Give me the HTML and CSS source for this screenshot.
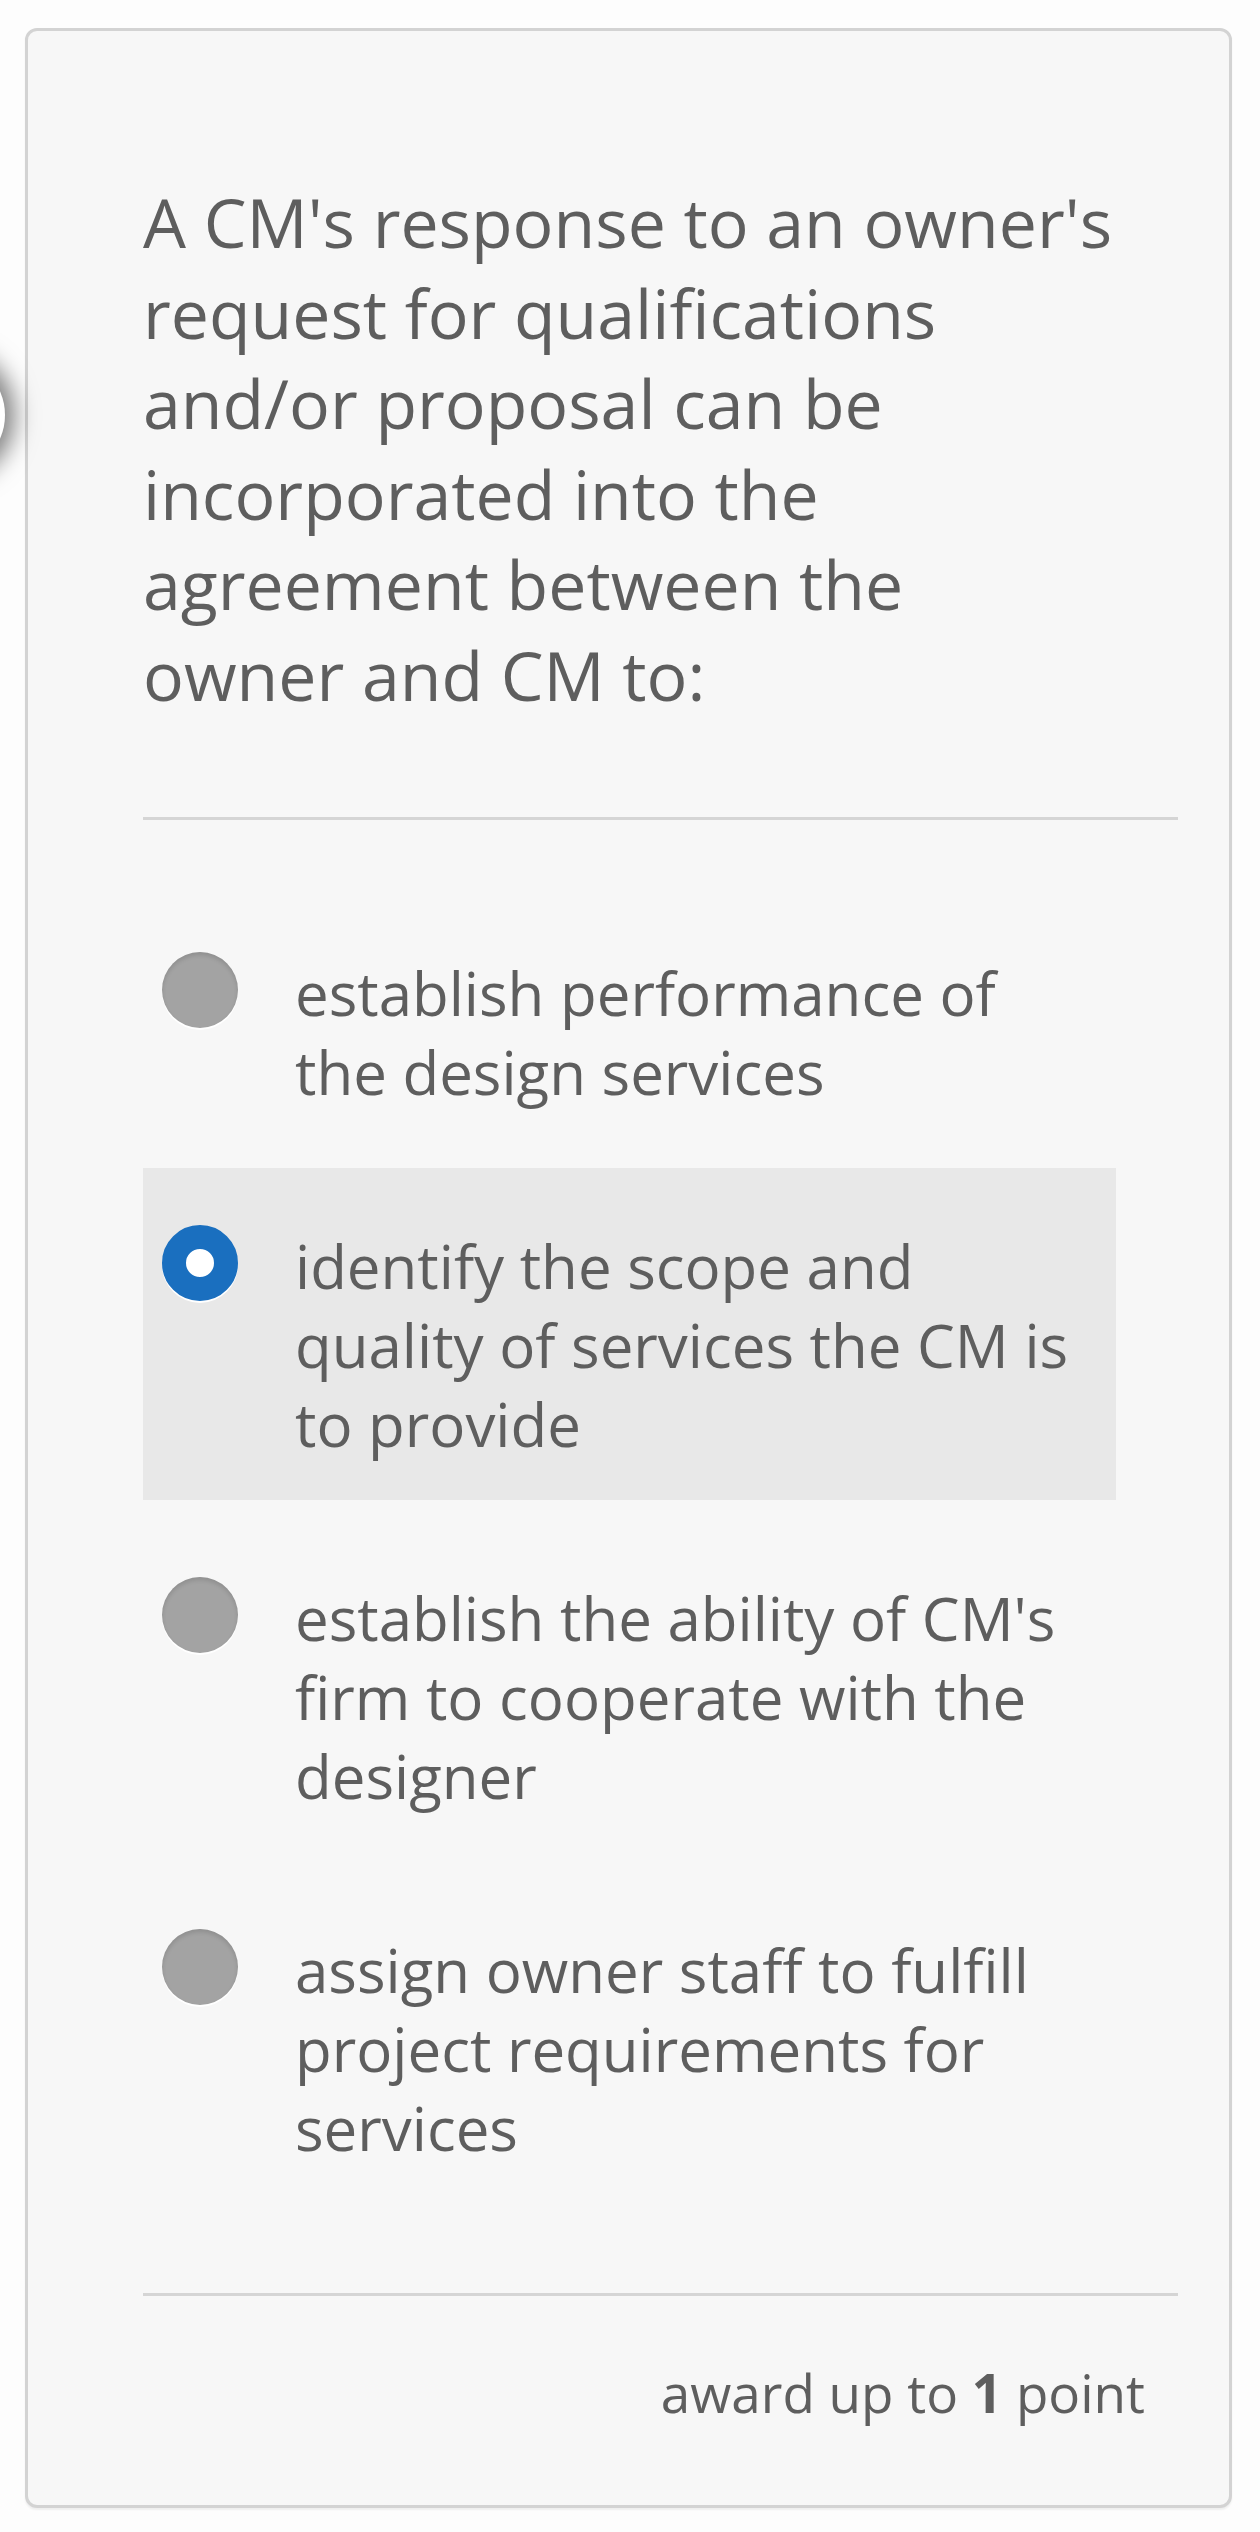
FILE: index.html
```html
<!DOCTYPE html>
<html lang="en">
<head>
<meta charset="utf-8">
<title>Question</title>
<link rel="stylesheet" href="styles.css">
</head>
<body>
<div class="page">
  <div class="card">
    <p class="question">A CM's response to an owner's<br>request for qualifications<br>and/or proposal can be<br>incorporated into the<br>agreement between the<br>owner and CM to:</p>
    <hr class="rule rule-top">
    <ul class="options">
      <li class="option"><span class="radio"></span><span class="label">establish performance of<br>the design services</span></li>
      <li class="option selected"><span class="radio"></span><span class="label">identify the scope and<br>quality of services the CM is<br>to provide</span></li>
      <li class="option"><span class="radio"></span><span class="label">establish the ability of CM's<br>firm to cooperate with the<br>designer</span></li>
      <li class="option"><span class="radio"></span><span class="label">assign owner staff to fulfill<br>project requirements for<br>services</span></li>
    </ul>
    <hr class="rule rule-bottom">
    <p class="award">award up to <b>1</b> point</p>
  </div>
  <div class="fab"></div>
</div>
</body>
</html>
```

FILE: styles.css
```css
html, body {
  margin: 0;
  padding: 0;
  background: #fdfdfd;
}
body {
  font-family: "Open Sans", "Noto Sans", sans-serif;
  color: #5e5e5e;
}
.page {
  position: relative;
  padding: 28px 28px 24px 25px;
  height: 2532px;
  box-sizing: border-box;
  overflow: hidden;
}
.card {
  background: #f7f7f7;
  border: 3px solid #d3d3d3;
  border-radius: 12px;
  box-shadow: 0 2px 2px rgba(0,0,0,0.06);
  height: 2480px;
  box-sizing: border-box;
  padding: 146px 51px 0 115px;
}
.question {
  margin: 0;
  font-size: 68px;
  line-height: 90.5px;
  white-space: nowrap;
}
.rule {
  border: 0;
  height: 3px;
  background: #d5d5d5;
  margin: 0;
}
.rule-top {
  margin-top: 97px;
}
.options {
  list-style: none;
  margin: 75px 62px 0 0;
  padding: 0;
  display: flex;
  flex-direction: column;
  gap: 20px;
}
.option {
  display: flex;
  align-items: flex-start;
  gap: 57px;
  padding: 55px 36px 36px 19px;
  font-size: 60px;
  line-height: 79px;
  white-space: nowrap;
}
.option.selected {
  background: #e8e8e8;
}
.label {
  padding-top: 4px;
}
.radio {
  flex: none;
  width: 76px;
  height: 76px;
  margin-top: 2px;
  border-radius: 50%;
  background: #a3a3a3;
  box-shadow: inset 0 3px 4px rgba(0,0,0,0.12), 0 2px 0 #ffffff;
  box-sizing: border-box;
}
.option.selected .radio {
  background: #ffffff;
  border: 24px solid #1a6fbf;
  box-shadow: 0 2px 0 #ffffff;
}
.rule-bottom {
  margin-top: 89px;
}
.award {
  margin: 57px 33px 0 0;
  text-align: right;
  font-size: 53px;
  line-height: 79px;
}
.award b {
  font-weight: 700;
}
.fab {
  position: absolute;
  left: -113px;
  top: 356px;
  width: 118px;
  height: 118px;
  border-radius: 50%;
  background: #ffffff;
  box-shadow: 0 0 24px 9px rgba(0,0,0,0.52);
}
```
